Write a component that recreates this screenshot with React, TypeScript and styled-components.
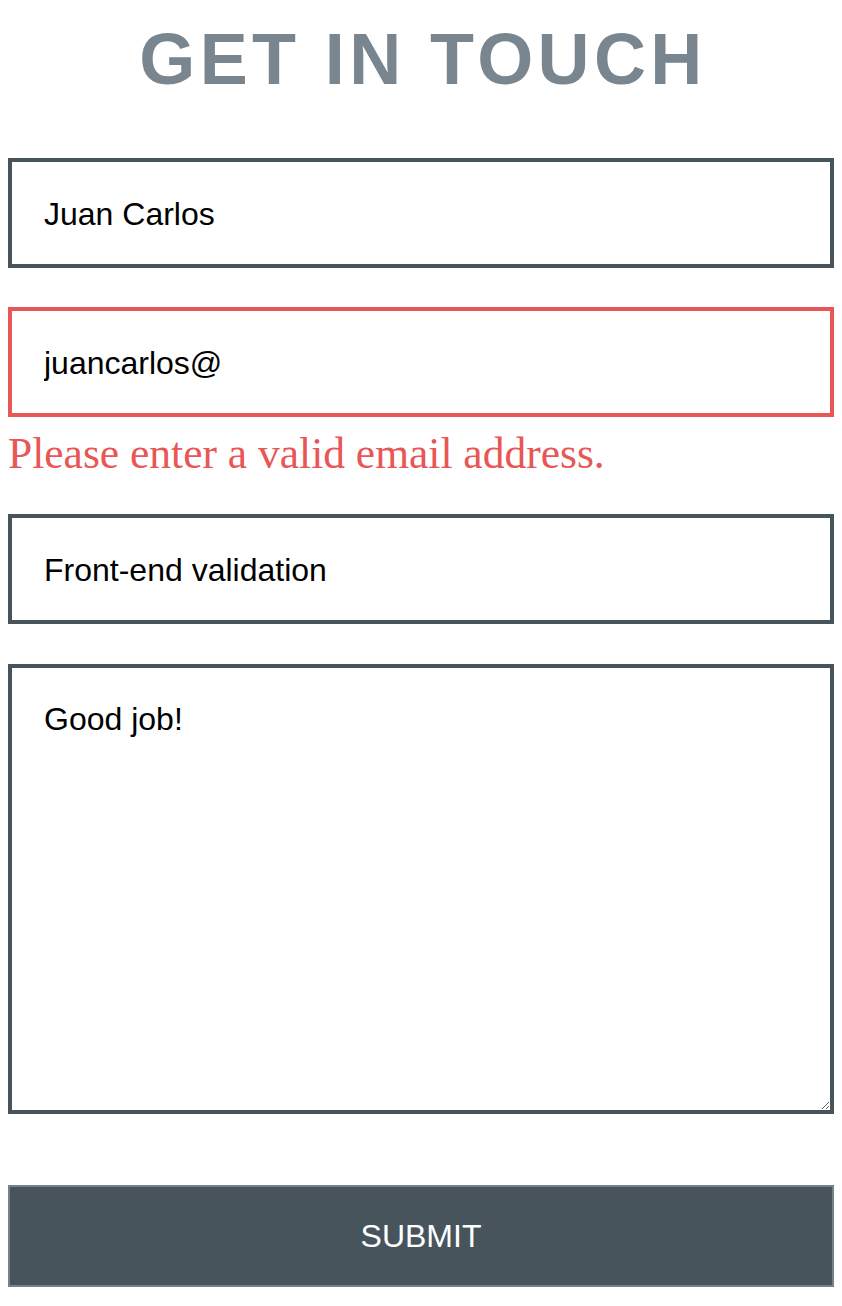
import React, { useEffect, useRef, useState } from 'react';
import styled, { createGlobalStyle, css } from 'styled-components';

const GlobalStyle = createGlobalStyle`
  body {
    margin: 8px;
    background: #ffffff;
    font-family: 'Liberation Sans', Arial, sans-serif;
  }
`;

const slate = '#47545c';
const danger = '#e85656';

const Form = styled.form`
  display: flex;
  flex-direction: column;
  width: 100%;
`;

const Title = styled.h1`
  margin: 10px 0 0;
  text-align: center;
  font-family: 'Liberation Sans', Arial, sans-serif;
  font-size: 72px;
  font-weight: bold;
  letter-spacing: 4.4px;
  padding-left: 4px;
  color: #7a868f;
`;

const fieldBase = css<{ $invalid?: boolean; $top: number }>`
  box-sizing: border-box;
  width: 100%;
  margin-top: ${({ $top }) => $top}px;
  border: 4px solid ${({ $invalid }) => ($invalid ? danger : slate)};
  border-radius: 0;
  background: #fff;
  color: #000;
  caret-color: #000;
  font-family: 'Liberation Sans', Arial, sans-serif;
  font-size: 32px;
  outline: none;
`;

const Input = styled.input<{ $invalid?: boolean; $top: number }>`
  ${fieldBase};
  height: 110px;
  padding: 2px 32px 0;
`;

const TextArea = styled.textarea<{ $invalid?: boolean; $top: number }>`
  ${fieldBase};
  height: 450px;
  padding: 33px 32px;
  line-height: normal;
`;

const ErrorText = styled.div`
  margin-top: 11px;
  font-family: 'Liberation Serif', 'Times New Roman', serif;
  font-size: 43.5px;
  color: ${danger};
`;

const SubmitButton = styled.button<{ $top: number }>`
  box-sizing: border-box;
  width: 100%;
  height: 102px;
  margin-top: ${({ $top }) => $top}px;
  border: 2px solid #75828a;
  background: ${slate};
  color: #fff;
  font-family: 'Liberation Sans', Arial, sans-serif;
  font-size: 32px;
  text-transform: uppercase;
  cursor: pointer;
`;

export default function App() {
  const [name, setName] = useState('Juan Carlos');
  const [email, setEmail] = useState('juancarlos@');
  const [subject, setSubject] = useState('Front-end validation');
  const [message, setMessage] = useState('Good job!');
  const messageRef = useRef<HTMLTextAreaElement>(null);

  useEffect(() => {
    const el = messageRef.current;
    if (el) {
      el.focus();
      el.setSelectionRange(el.value.length, el.value.length);
    }
  }, []);

  const emailValid = /^[^@\s]+@[^@\s]+\.[^@\s]+$/.test(email);

  return (
    <>
      <GlobalStyle />
      <Title>GET IN TOUCH</Title>
      <Form onSubmit={(e) => e.preventDefault()} noValidate>
        <Input $top={58} value={name} onChange={(e) => setName(e.target.value)} />
        <Input
          $top={39}
          $invalid={!emailValid}
          value={email}
          onChange={(e) => setEmail(e.target.value)}
        />
        {!emailValid && <ErrorText>Please enter a valid email address.</ErrorText>}
        <Input $top={emailValid ? 39 : 36} value={subject} onChange={(e) => setSubject(e.target.value)} />
        <TextArea ref={messageRef} $top={40} value={message} onChange={(e) => setMessage(e.target.value)} />
        <SubmitButton $top={71} type="submit">
          Submit
        </SubmitButton>
      </Form>
    </>
  );
}
